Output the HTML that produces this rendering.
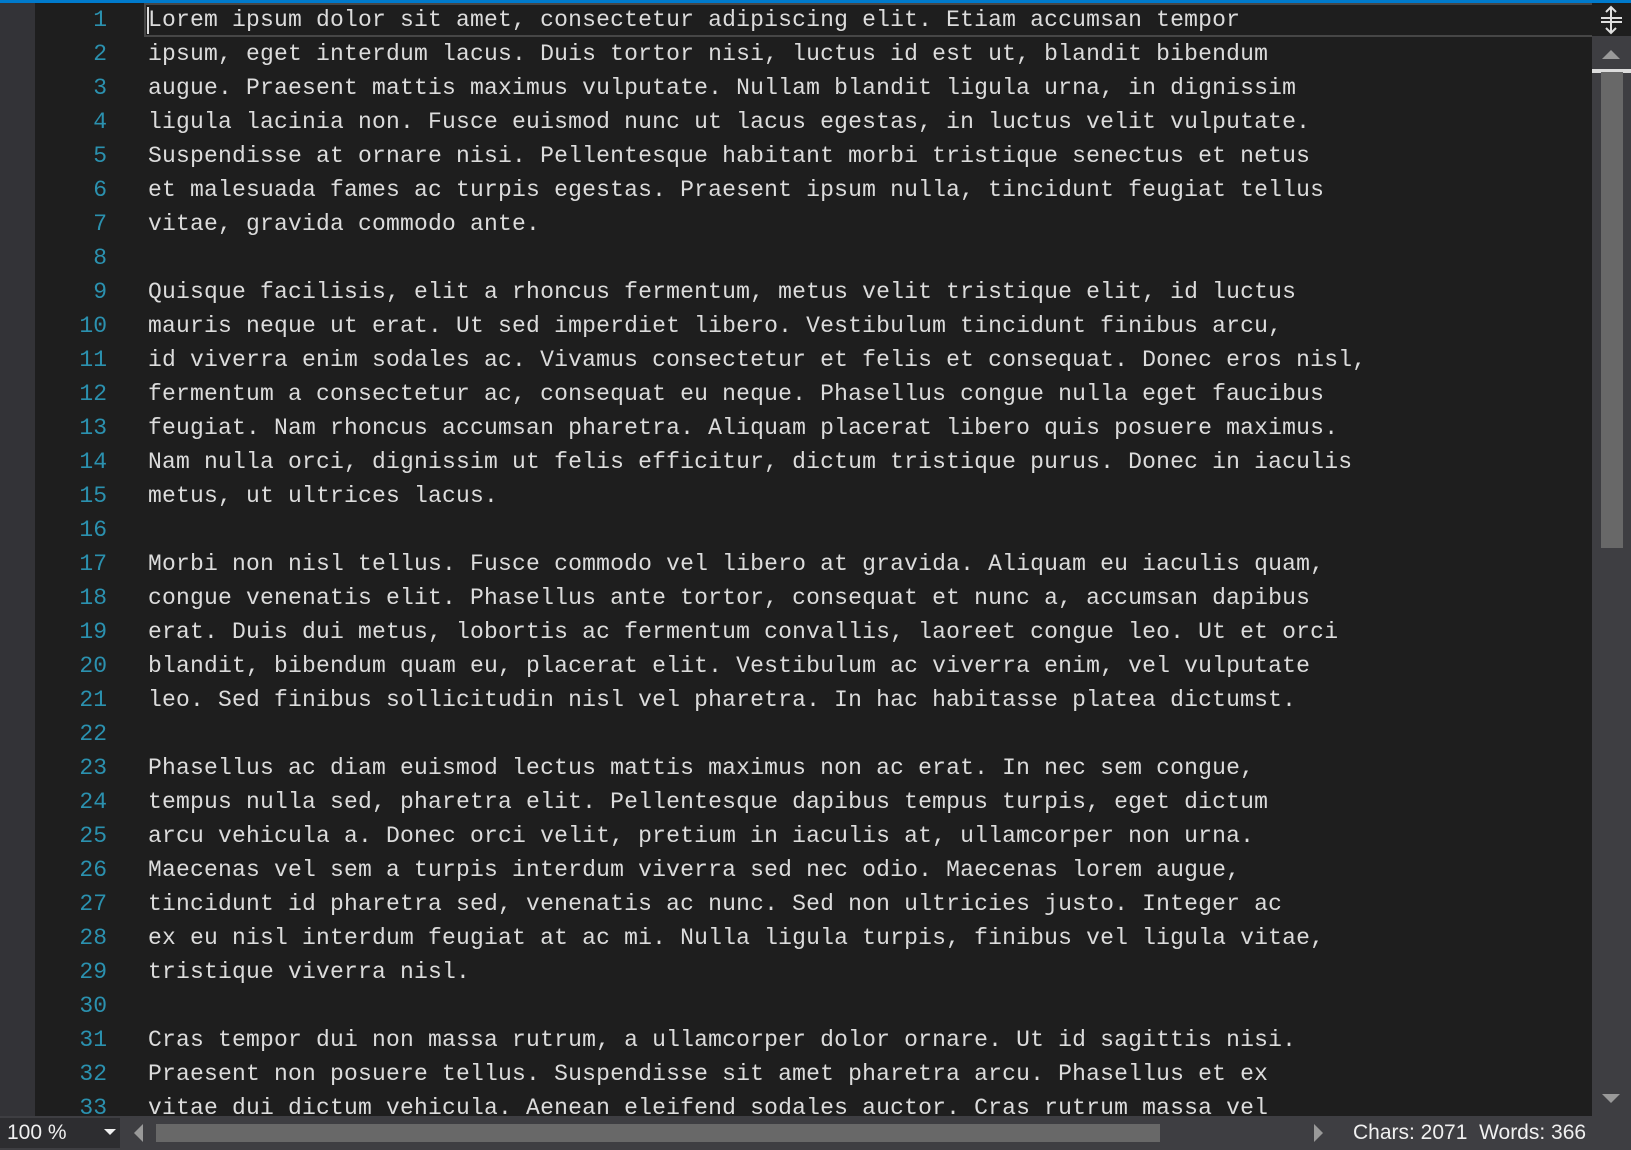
<!DOCTYPE html>
<html><head><meta charset="utf-8"><style>
*{margin:0;padding:0;box-sizing:border-box}
body{width:1631px;height:1150px;background:#1e1e1e;overflow:hidden;position:relative;font-family:"Liberation Mono",monospace}
#top{position:absolute;left:0;top:0;width:1631px;height:3px;background:#007acc}
#gut{position:absolute;left:0;top:3px;width:35px;height:1113px;background:#333337}
#nums{position:absolute;left:35px;top:3px;width:72px;text-align:right;color:#2b91af;font-size:23px;line-height:34px}
#text{position:absolute;left:148px;top:3px;color:#dcdcdc;font-size:23px;line-height:34px;white-space:pre;letter-spacing:0.2px}
#cur{position:absolute;left:144px;top:3px;width:1448px;height:34px;border:2px solid #464646;border-right:none}
#caret{position:absolute;left:147px;top:7px;width:2px;height:27px;background:#dcdcdc}
#vs{position:absolute;left:1592px;top:3px;width:39px;height:1113px;background:#3e3e42}
#vtop{position:absolute;left:1592px;top:3px;width:39px;height:33px;background:#1e1e1e}
#thumb{position:absolute;left:1601px;top:72px;width:22px;height:476px;background:#686868}
#tline{position:absolute;left:1592px;top:69px;width:39px;height:4px;background:#dcdcdc}
#status{position:absolute;left:0;top:1116px;width:1631px;height:34px;background:#3e3e42;font-family:"Liberation Sans",sans-serif;color:#f0f0f0;font-size:21px}
#zoom{position:absolute;left:0;top:2px;width:120px;height:30px;background:#2d2d30;padding-left:7px;line-height:30px}
#hthumb{position:absolute;left:156px;top:8px;width:1004px;height:18px;background:#686868}
</style></head><body>
<div id="top"></div><div id="gut"></div>
<div id="nums">1<br>2<br>3<br>4<br>5<br>6<br>7<br>8<br>9<br>10<br>11<br>12<br>13<br>14<br>15<br>16<br>17<br>18<br>19<br>20<br>21<br>22<br>23<br>24<br>25<br>26<br>27<br>28<br>29<br>30<br>31<br>32<br>33</div>
<div id="cur"></div>
<div id="text">Lorem ipsum dolor sit amet, consectetur adipiscing elit. Etiam accumsan tempor
ipsum, eget interdum lacus. Duis tortor nisi, luctus id est ut, blandit bibendum
augue. Praesent mattis maximus vulputate. Nullam blandit ligula urna, in dignissim
ligula lacinia non. Fusce euismod nunc ut lacus egestas, in luctus velit vulputate.
Suspendisse at ornare nisi. Pellentesque habitant morbi tristique senectus et netus
et malesuada fames ac turpis egestas. Praesent ipsum nulla, tincidunt feugiat tellus
vitae, gravida commodo ante.

Quisque facilisis, elit a rhoncus fermentum, metus velit tristique elit, id luctus
mauris neque ut erat. Ut sed imperdiet libero. Vestibulum tincidunt finibus arcu,
id viverra enim sodales ac. Vivamus consectetur et felis et consequat. Donec eros nisl,
fermentum a consectetur ac, consequat eu neque. Phasellus congue nulla eget faucibus
feugiat. Nam rhoncus accumsan pharetra. Aliquam placerat libero quis posuere maximus.
Nam nulla orci, dignissim ut felis efficitur, dictum tristique purus. Donec in iaculis
metus, ut ultrices lacus.

Morbi non nisl tellus. Fusce commodo vel libero at gravida. Aliquam eu iaculis quam,
congue venenatis elit. Phasellus ante tortor, consequat et nunc a, accumsan dapibus
erat. Duis dui metus, lobortis ac fermentum convallis, laoreet congue leo. Ut et orci
blandit, bibendum quam eu, placerat elit. Vestibulum ac viverra enim, vel vulputate
leo. Sed finibus sollicitudin nisl vel pharetra. In hac habitasse platea dictumst.

Phasellus ac diam euismod lectus mattis maximus non ac erat. In nec sem congue,
tempus nulla sed, pharetra elit. Pellentesque dapibus tempus turpis, eget dictum
arcu vehicula a. Donec orci velit, pretium in iaculis at, ullamcorper non urna.
Maecenas vel sem a turpis interdum viverra sed nec odio. Maecenas lorem augue,
tincidunt id pharetra sed, venenatis ac nunc. Sed non ultricies justo. Integer ac
ex eu nisl interdum feugiat at ac mi. Nulla ligula turpis, finibus vel ligula vitae,
tristique viverra nisl.

Cras tempor dui non massa rutrum, a ullamcorper dolor ornare. Ut id sagittis nisi.
Praesent non posuere tellus. Suspendisse sit amet pharetra arcu. Phasellus et ex
vitae dui dictum vehicula. Aenean eleifend sodales auctor. Cras rutrum massa vel</div>
<div id="caret"></div>
<div id="vs"></div><div id="vtop"></div>
<svg style="position:absolute;left:1592px;top:3px" width="39" height="1113">
<path d="M19 4v26M14 9l5-5 5 5M14 25l5 5 5-5" stroke="#e0e0e0" stroke-width="2" fill="none"/>
<path d="M9 15h21M9 19h21" stroke="#e0e0e0" stroke-width="2"/>
<path d="M10 56l9-9 9 9z" fill="#999"/>
<path d="M10 1091l9 9 9-9z" fill="#999"/>
</svg>
<div id="tline"></div><div id="thumb"></div>
<div id="status">
<div id="zoom">100 %</div>
<svg style="position:absolute;left:0;top:0" width="1631" height="34">
<path d="M104 13h12l-6 6z" fill="#f0f0f0"/>
<path d="M143 8v18l-9-9z" fill="#999"/>
<path d="M1314 8v18l9-9z" fill="#999"/>
</svg>
<div id="hthumb"></div>
<div style="position:absolute;left:1353px;top:0;line-height:34px">Chars: 2071&nbsp; Words: 366</div>
</div>
</body></html>
